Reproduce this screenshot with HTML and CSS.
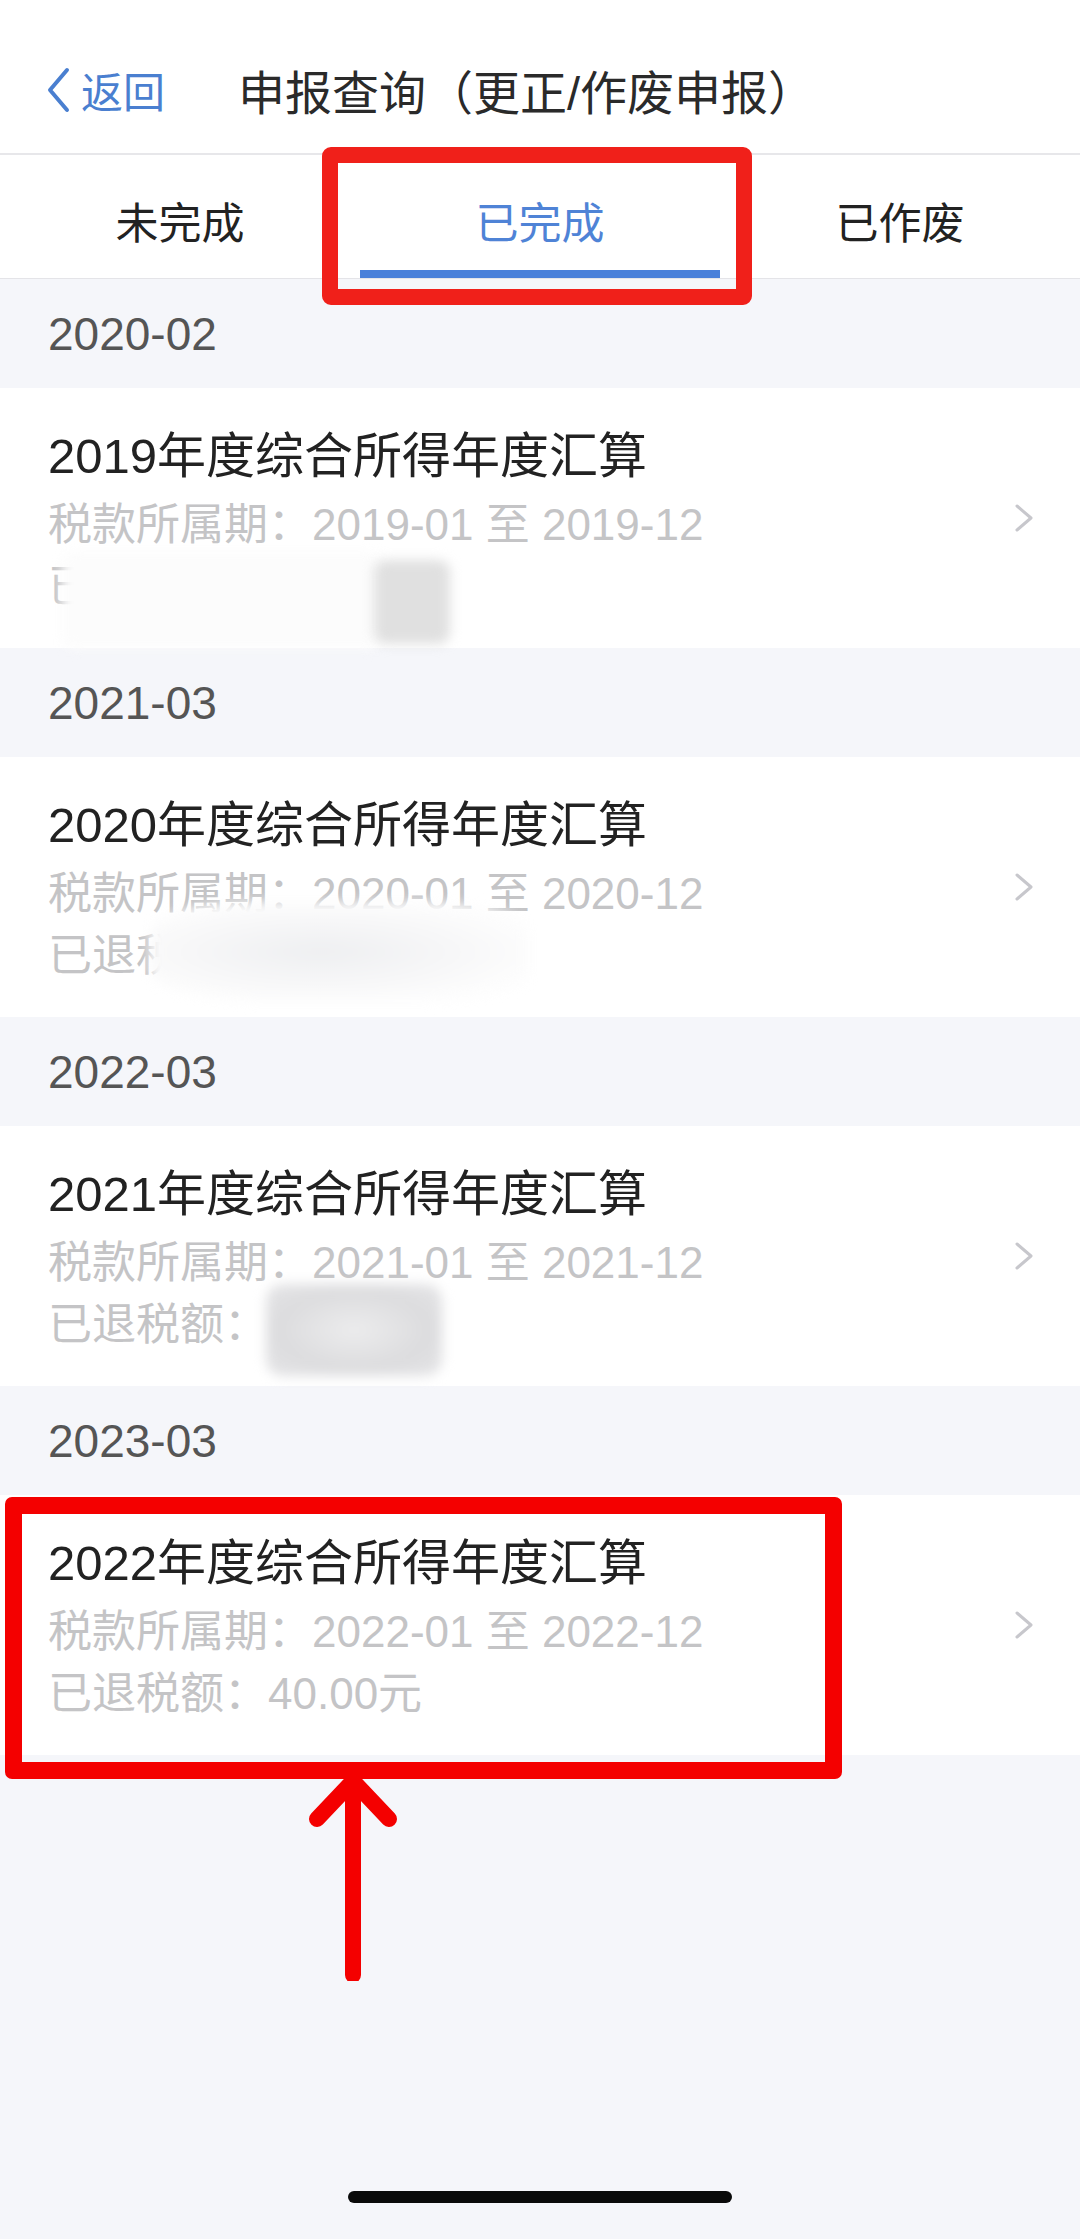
FILE: index.html
```html
<!DOCTYPE html>
<html>
	<head>
		<meta charset="UTF-8">
		<title>申报查询</title>
		<link rel="stylesheet" href="styles.css">
	</head>
	<body>
		<!--顶部-->
		<div class="topbar">
			<div class="back">
				<svg width="26" height="46" viewBox="0 0 26 46"><path d="M22 3 L5 23 L22 43" fill="none" stroke="#4a7fd0" stroke-width="4" stroke-linecap="round" stroke-linejoin="round"/></svg>
				<span>返回</span>
			</div>
			<div class="title">申报查询（更正/作废申报）</div>
		</div>
		<!--标签-->
		<div class="tabs">
			<div class="tab">未完成</div>
			<div class="tab active">已完成</div>
			<div class="tab">已作废</div>
			<div class="mark mark-tab"></div>
		</div>
		<!--列表-->
		<div class="list">
			<div class="date">2020-02</div>
			<div class="card">
				<div class="name">2019年度综合所得年度汇算</div>
				<div class="info">税款所属期：2019-01 至 2019-12</div>
				<div class="info">已退税额：</div>
				<div class="smudge s1"></div>
				<div class="smudge s1b"></div>
				<svg class="arrow" width="22" height="30" viewBox="0 0 22 30"><path d="M4 3 L18 15 L4 27" fill="none" stroke="#c7c7cc" stroke-width="3" stroke-linecap="round" stroke-linejoin="round"/></svg>
			</div>

			<div class="date">2021-03</div>
			<div class="card">
				<div class="name">2020年度综合所得年度汇算</div>
				<div class="info">税款所属期：2020-01 至 2020-12</div>
				<div class="info">已退税额：</div>
				<div class="smudge s2"></div>
				<svg class="arrow" width="22" height="30" viewBox="0 0 22 30"><path d="M4 3 L18 15 L4 27" fill="none" stroke="#c7c7cc" stroke-width="3" stroke-linecap="round" stroke-linejoin="round"/></svg>
			</div>

			<div class="date">2022-03</div>
			<div class="card">
				<div class="name">2021年度综合所得年度汇算</div>
				<div class="info">税款所属期：2021-01 至 2021-12</div>
				<div class="info">已退税额：</div>
				<div class="smudge s3"></div>
				<svg class="arrow" width="22" height="30" viewBox="0 0 22 30"><path d="M4 3 L18 15 L4 27" fill="none" stroke="#c7c7cc" stroke-width="3" stroke-linecap="round" stroke-linejoin="round"/></svg>
			</div>

			<div class="date">2023-03</div>
			<div class="card">
				<div class="name">2022年度综合所得年度汇算</div>
				<div class="info">税款所属期：2022-01 至 2022-12</div>
				<div class="info">已退税额：40.00元</div>
				<svg class="arrow" width="22" height="30" viewBox="0 0 22 30"><path d="M4 3 L18 15 L4 27" fill="none" stroke="#c7c7cc" stroke-width="3" stroke-linecap="round" stroke-linejoin="round"/></svg>
				<div class="mark mark-card"></div>
				<svg class="pointer" width="100" height="206" viewBox="0 0 100 206"><path d="M50 6 L50 200 M14 44 L50 6 L86 44" fill="none" stroke="#f40000" stroke-width="16" stroke-linecap="round" stroke-linejoin="round"/></svg>
			</div>
		</div>
		<!--底部横条-->
		<div class="home"></div>
	</body>
</html>
```

FILE: styles.css
```css
body{
	margin: 0;
	width: 1080px;
	min-height: 2239px;
	background: #f5f6fa;
	font-family: "Liberation Sans", "Noto Sans CJK SC", sans-serif;
	display: flex;
	flex-direction: column;
}
.topbar{
	height: 155px;
	box-sizing: border-box;
	padding: 26px 0 0 45px;
	background: #fff;
	border-bottom: 2px solid #e7e7ea;
	display: flex;
	align-items: center;
}
.back{
	display: flex;
	align-items: center;
	gap: 10px;
	color: #4a7fd0;
	font-size: 42px;
	width: 193px;
}
.title{
	font-size: 47px;
	color: #2a2a2a;
}
.tabs{
	position: relative;
	height: 124px;
	box-sizing: border-box;
	background: #fff;
	border-bottom: 1px solid #e4e4e8;
	display: grid;
	grid-template-columns: 1fr 1fr 1fr;
}
.tab{
	display: flex;
	align-items: center;
	justify-content: center;
	font-size: 43px;
	color: #222;
	padding-top: 6px;
}
.tab.active{
	color: #4f83d6;
	border-bottom: 8px solid #4a80da;
	padding-top: 14px;
}
.mark{
	position: absolute;
	box-sizing: border-box;
	border-radius: 9px;
}
.mark-tab{
	left: 322px;
	top: -8px;
	width: 430px;
	height: 158px;
	border: 16px solid #f0201a;
}
.date{
	height: 109px;
	box-sizing: border-box;
	padding-left: 48px;
	display: flex;
	align-items: center;
	font-size: 46px;
	color: #555;
}
.card{
	position: relative;
	height: 260px;
	box-sizing: border-box;
	padding: 38px 48px 0;
	background: #fff;
}
.name{
	font-size: 49px;
	line-height: 60px;
	color: #222;
}
.info{
	font-size: 44px;
	line-height: 62px;
	color: #c4c4c6;
	margin-top: 0;
}
.name + .info{
	margin-top: 8px;
}
.arrow{
	position: absolute;
	right: 45px;
	top: 115px;
}
.smudge{
	position: absolute;
	border-radius: 30%;
	filter: blur(6px);
}
.s1{
	left: 62px;
	top: 164px;
	width: 320px;
	height: 96px;
	background: #fcfcfc;
	border-radius: 12px;
}
.s1b{
	left: 374px;
	top: 172px;
	width: 76px;
	height: 84px;
	background: #e0e0e0;
	border-radius: 12px;
}
.s2{
	left: 150px;
	top: 145px;
	width: 380px;
	height: 100px;
	background: radial-gradient(ellipse at 45% 50%, #eeeff1 0%, #f7f7f8 45%, #fdfdfd 75%);
}
.s3{
	left: 266px;
	top: 158px;
	width: 176px;
	height: 92px;
	border-radius: 16px;
	background: radial-gradient(ellipse at 50% 50%, #ececed 0%, #dcdcde 60%, #e6e6e8 100%);
}
.mark-card{
	left: 5px;
	top: 2px;
	width: 837px;
	height: 282px;
	border: 17px solid #f40000;
	border-radius: 7px;
}
.pointer{
	position: absolute;
	left: 303px;
	top: 280px;
}
.home{
	margin: auto auto 36px;
	width: 384px;
	height: 12px;
	border-radius: 6px;
	background: #0a0a0a;
}
```
